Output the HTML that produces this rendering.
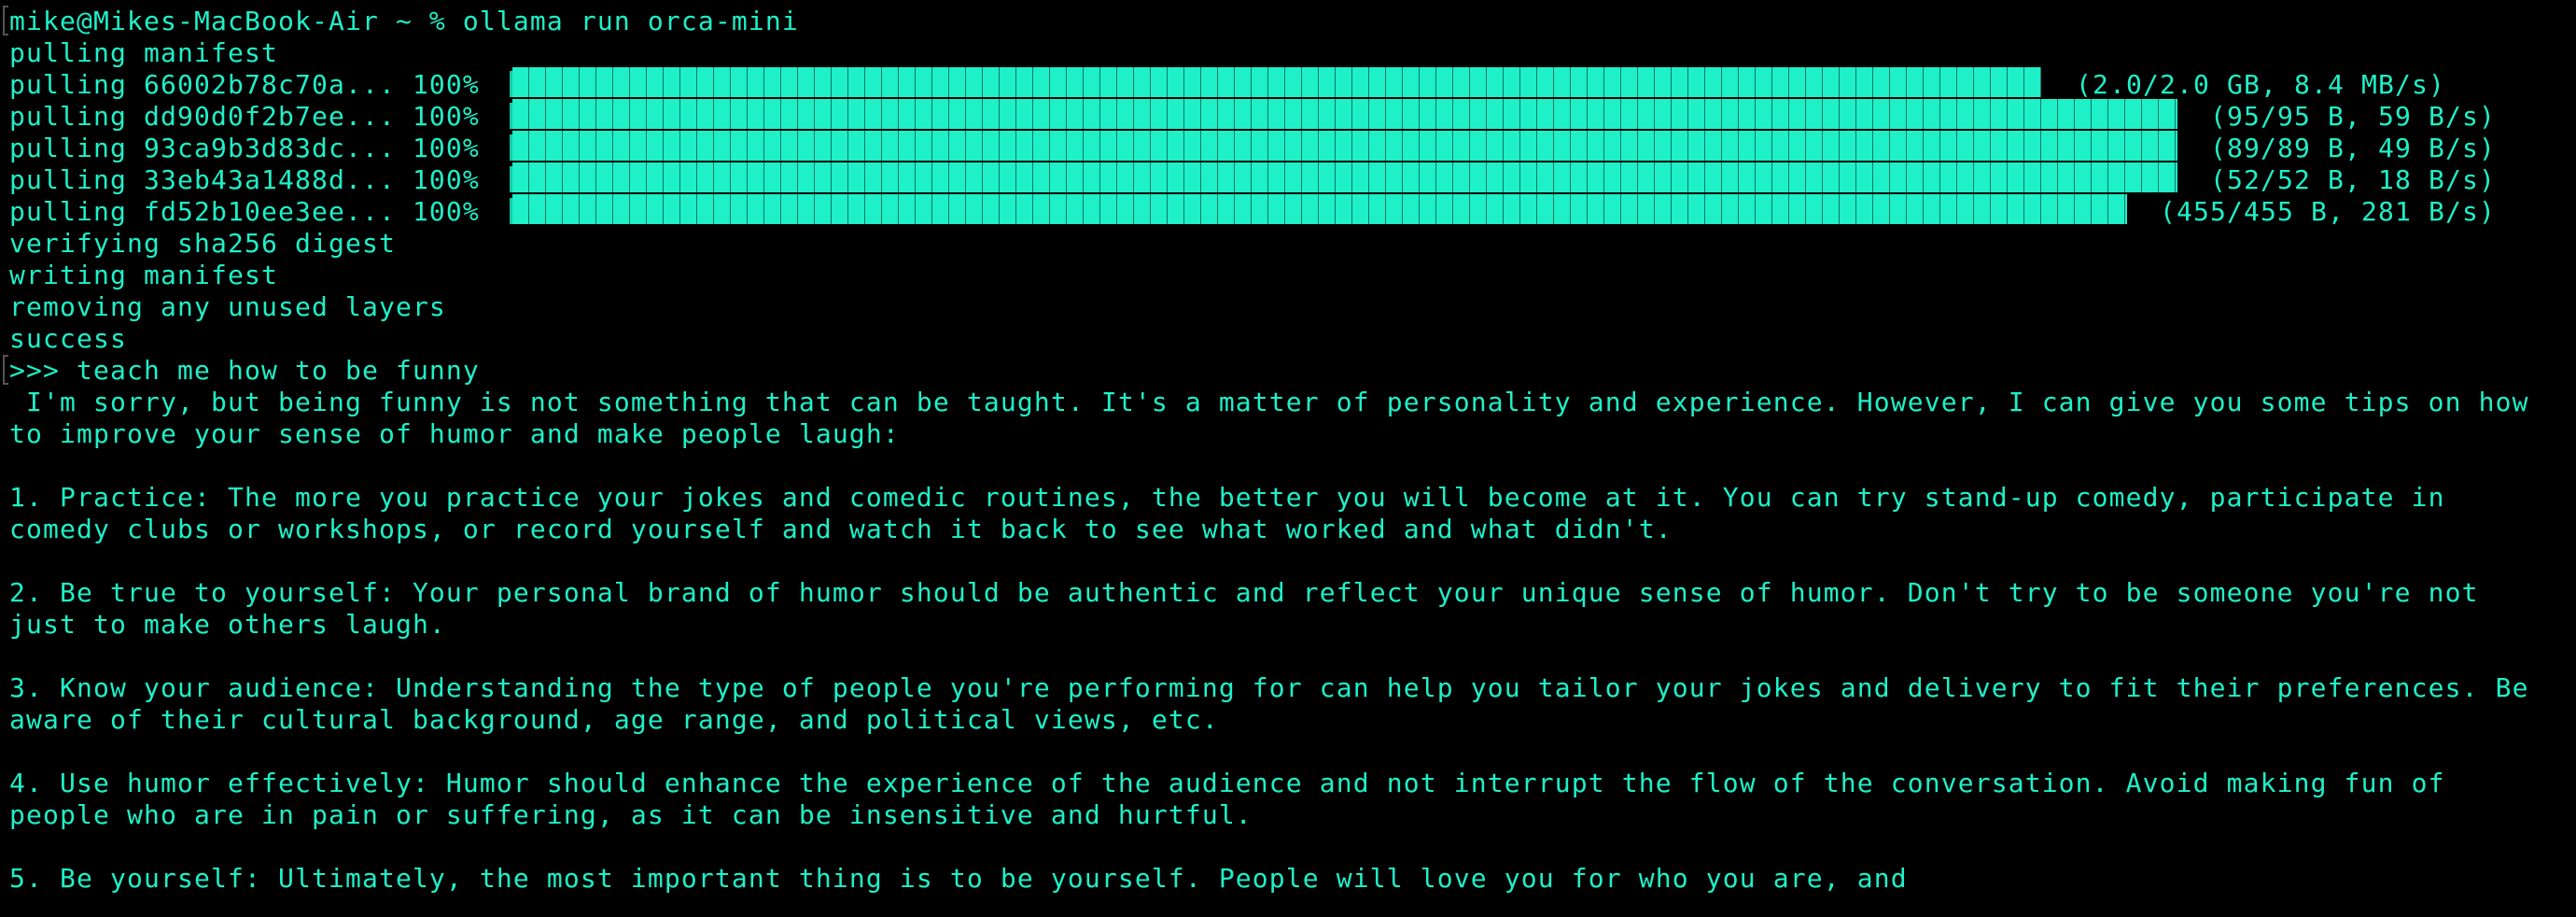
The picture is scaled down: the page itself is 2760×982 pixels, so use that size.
<!DOCTYPE html>
<html><head><meta charset="utf-8"><style>
html,body{margin:0;padding:0;background:#000;width:2760px;height:982px;overflow:hidden}
.l{position:absolute;left:10px;white-space:pre;font-family:"DejaVu Sans Mono","Liberation Mono",monospace;font-size:28px;letter-spacing:1.14px;line-height:34px;color:#1ef0c8}
.bar{position:absolute;left:549px;height:32px;background:repeating-linear-gradient(90deg,#1ef0c8 0 17px,#0e7a64 17px 18px)}
.bl{position:absolute;left:546px;width:3px;height:28px;background:#17c9a6}
.br{position:absolute;left:3px;width:4px;height:28px;border:2px solid #555;border-right:none}
</style></head><body>
<div class="br" style="top:6px"></div>
<div class="br" style="top:380px"></div>
<div class="l" style="top:6px">mike@Mikes-MacBook-Air ~ % ollama run orca-mini</div>
<div class="l" style="top:40px">pulling manifest</div>
<div class="l" style="top:74px">pulling 66002b78c70a... 100%</div>
<div class="l" style="top:108px">pulling dd90d0f2b7ee... 100%</div>
<div class="l" style="top:142px">pulling 93ca9b3d83dc... 100%</div>
<div class="l" style="top:176px">pulling 33eb43a1488d... 100%</div>
<div class="l" style="top:210px">pulling fd52b10ee3ee... 100%</div>
<div class="bl" style="top:76px"></div><div class="bar" style="top:72px;width:1638px"></div>
<div class="bl" style="top:110px"></div><div class="bar" style="top:106px;width:1784px"></div>
<div class="bl" style="top:144px"></div><div class="bar" style="top:140px;width:1784px"></div>
<div class="bl" style="top:178px"></div><div class="bar" style="top:174px;width:1784px"></div>
<div class="bl" style="top:212px"></div><div class="bar" style="top:208px;width:1730px"></div>
<div class="l" style="top:74px;left:2224px">(2.0/2.0 GB, 8.4 MB/s)</div>
<div class="l" style="top:108px;left:2368px">(95/95 B, 59 B/s)</div>
<div class="l" style="top:142px;left:2368px">(89/89 B, 49 B/s)</div>
<div class="l" style="top:176px;left:2368px">(52/52 B, 18 B/s)</div>
<div class="l" style="top:210px;left:2314px">(455/455 B, 281 B/s)</div>
<div class="l" style="top:244px">verifying sha256 digest</div>
<div class="l" style="top:278px">writing manifest</div>
<div class="l" style="top:312px">removing any unused layers</div>
<div class="l" style="top:346px">success</div>
<div class="l" style="top:380px">&gt;&gt;&gt; teach me how to be funny</div>
<div class="l" style="top:414px"> I'm sorry, but being funny is not something that can be taught. It's a matter of personality and experience. However, I can give you some tips on how</div>
<div class="l" style="top:448px">to improve your sense of humor and make people laugh:</div>
<div class="l" style="top:516px">1. Practice: The more you practice your jokes and comedic routines, the better you will become at it. You can try stand-up comedy, participate in</div>
<div class="l" style="top:550px">comedy clubs or workshops, or record yourself and watch it back to see what worked and what didn't.</div>
<div class="l" style="top:618px">2. Be true to yourself: Your personal brand of humor should be authentic and reflect your unique sense of humor. Don't try to be someone you're not</div>
<div class="l" style="top:652px">just to make others laugh.</div>
<div class="l" style="top:720px">3. Know your audience: Understanding the type of people you're performing for can help you tailor your jokes and delivery to fit their preferences. Be</div>
<div class="l" style="top:754px">aware of their cultural background, age range, and political views, etc.</div>
<div class="l" style="top:822px">4. Use humor effectively: Humor should enhance the experience of the audience and not interrupt the flow of the conversation. Avoid making fun of</div>
<div class="l" style="top:856px">people who are in pain or suffering, as it can be insensitive and hurtful.</div>
<div class="l" style="top:924px">5. Be yourself: Ultimately, the most important thing is to be yourself. People will love you for who you are, and</div>
</body></html>
